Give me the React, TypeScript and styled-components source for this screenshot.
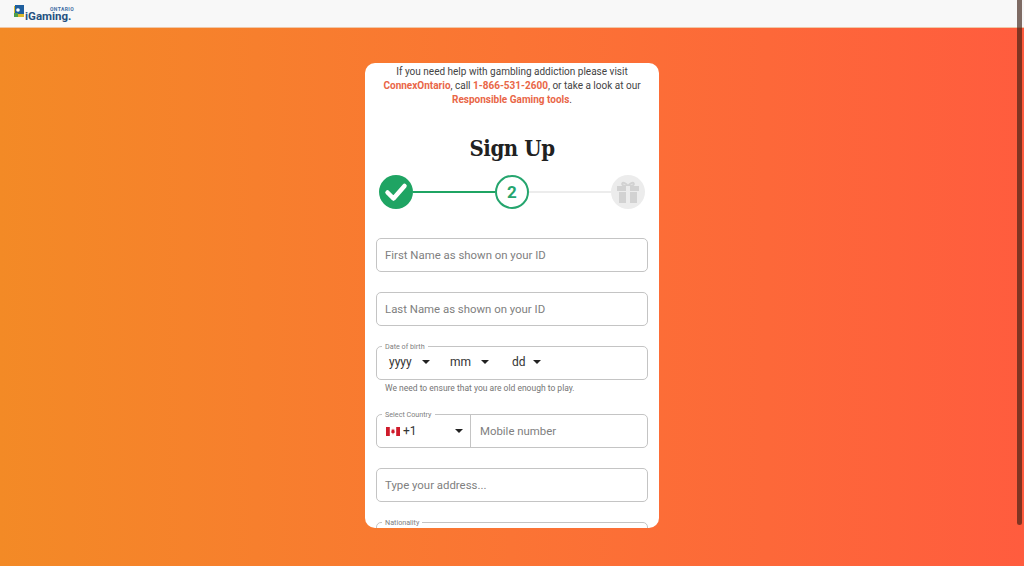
import React from 'react';
import styled, { createGlobalStyle } from 'styled-components';

const GlobalStyle = createGlobalStyle`
  html, body {
    margin: 0;
    padding: 0;
    height: 100%;
    overflow: hidden;
    font-family: Roboto, "Liberation Sans", sans-serif;
  }
`;

const Page = styled.div`
  position: relative;
  width: 1024px;
  height: 566px;
  display: flex;
  flex-direction: column;
  overflow: hidden;
  background: linear-gradient(90deg, #f38a26 0%, #fb7434 50%, #ff5c3e 100%);
`;

const TopBar = styled.header`
  height: 27px;
  flex-shrink: 0;
  background: #f8f8f8;
  border-bottom: 1px solid #f0c8a8;
  box-sizing: content-box;
  display: flex;
  align-items: flex-start;
  padding-left: 13px;
`;

const Logo = styled.div`
  position: relative;
  width: 64px;
  height: 27px;
`;

const LogoMark = styled.svg`
  position: absolute;
  left: 1px;
  top: 5px;
`;

const LogoWord = styled.span`
  position: absolute;
  left: 12px;
  top: 10px;
  font-size: 11.5px;
  line-height: 13px;
  font-weight: 700;
  color: #25507f;
`;

const LogoRegion = styled.span`
  position: absolute;
  left: 37px;
  top: 6px;
  font-size: 5px;
  line-height: 6px;
  font-weight: 700;
  letter-spacing: 0.4px;
  color: #3f6da3;
`;

const Card = styled.main`
  width: 294px;
  height: 465px;
  margin: 35px auto 0;
  box-sizing: border-box;
  padding: 2px 11px 0;
  background: #fff;
  border-radius: 10px;
  overflow: hidden;
`;

const Notice = styled.p`
  margin: 0;
  font-size: 10px;
  line-height: 14px;
  text-align: center;
  color: #444;
`;

const NoticeLink = styled.span`
  color: #e96647;
  font-weight: 700;
`;

const Title = styled.h1`
  margin: 25px 0 0;
  font-family: "DejaVu Serif Condensed", "DejaVu Serif", "Liberation Serif", serif;
  font-stretch: condensed;
  font-size: 22px;
  line-height: 32px;
  font-weight: 700;
  letter-spacing: -0.4px;
  text-align: center;
  color: #212121;
`;

const Stepper = styled.div`
  display: flex;
  align-items: center;
  margin: 11px 3px 0;
`;

const StepCircle = styled.div<{ $kind: 'done' | 'active' | 'todo' }>`
  width: 34px;
  height: 34px;
  flex-shrink: 0;
  box-sizing: border-box;
  border-radius: 50%;
  display: flex;
  align-items: center;
  justify-content: center;
  font-size: 17px;
  font-weight: 700;
  color: #25a56e;
  background: ${p => (p.$kind === 'done' ? '#1fa463' : p.$kind === 'todo' ? '#ececec' : '#fff')};
  border: ${p => (p.$kind === 'active' ? '2px solid #25a56e' : 'none')};
`;

const StepLine = styled.div<{ $done?: boolean }>`
  flex: 1;
  height: 2px;
  background: ${p => (p.$done ? '#1fa463' : '#ececec')};
`;

const Form = styled.form`
  display: flex;
  flex-direction: column;
  margin-top: 29px;
`;

const Field = styled.div<{ $gap?: number }>`
  position: relative;
  height: 34px;
  box-sizing: border-box;
  flex-shrink: 0;
  display: flex;
  align-items: center;
  border: 1px solid #c4c4c4;
  border-bottom-width: 1.5px;
  border-radius: 5px;
  margin-bottom: ${p => p.$gap ?? 20}px;
`;

const Placeholder = styled.span`
  padding-left: 8px;
  font-size: 11.4px;
  color: #808080;
`;

const Legend = styled.span`
  position: absolute;
  left: 5px;
  top: -5px;
  padding: 0 3px;
  background: #fff;
  font-size: 7.2px;
  line-height: 9px;
  color: #808080;
`;

const DateParts = styled.div`
  display: flex;
  padding: 0 0 3px 12px;
`;

const DatePart = styled.div<{ $width: number }>`
  width: ${p => p.$width}px;
  display: flex;
  align-items: center;
  font-size: 12px;
  color: #333;
`;

const Caret = styled.span<{ $left: number }>`
  width: 0;
  height: 0;
  margin-left: ${p => p.$left}px;
  border-left: 4px solid transparent;
  border-right: 4px solid transparent;
  border-top: 4px solid #222;
`;

const Helper = styled.div`
  height: 14px;
  margin: 1px 0 19px 9px;
  font-size: 8.5px;
  line-height: 14px;
  color: #757575;
`;

const CountryPicker = styled.div`
  width: 94px;
  height: 100%;
  box-sizing: border-box;
  display: flex;
  align-items: center;
  padding: 0 7px 0 9px;
  border-right: 1px solid #c4c4c4;
  font-size: 12px;
  color: #333;
`;

const Dial = styled.span`
  margin-left: 3px;
  flex: 1;
`;

const MobilePlaceholder = styled(Placeholder)`
  padding-left: 9px;
`;

const ScrollThumb = styled.div`
  position: absolute;
  top: 0;
  right: 2px;
  width: 5px;
  height: 525px;
  border-radius: 0 0 3px 3px;
  background: rgba(60, 30, 20, 0.65);
`;

const CanadaFlag = () => (
  <svg width="14" height="9" viewBox="0 0 14 9" aria-hidden="true">
    <rect width="14" height="9" fill="#fff" />
    <rect width="3.8" height="9" fill="#cf1b2b" />
    <rect x="10.2" width="3.8" height="9" fill="#cf1b2b" />
    <path d="M7 1.600 7.700 3l.9-.4-.4 2 .9-.2-.4 1.200-1.500.9v.9h-.4v-.9l-1.500-.9-.4-1.200.9.2-.4-2 .9.4z" fill="#cf1b2b" />
  </svg>
);

const GiftIcon = () => (
  <svg width="24" height="22" viewBox="0 0 24 22" aria-hidden="true">
    <path d="M12 5C10 2 7 1 6.200 2.500 5.500 4 8 5 12 5c4 0 6.500-1 5.800-2.500C17 1 14 2 12 5z" fill="none" stroke="#d2d2d2" strokeWidth="1.800" />
    <rect x="1" y="5" width="22" height="5" fill="#d2d2d2" />
    <rect x="3" y="11" width="18" height="11" fill="#d2d2d2" />
    <rect x="10" y="5" width="4" height="17" fill="#ececec" />
  </svg>
);

const App: React.FC = () => {
  return (
    <Page>
      <GlobalStyle />
      <TopBar>
        <Logo>
          <LogoMark width="11" height="12" viewBox="0 0 11 12" aria-hidden="true">
            <rect x="0" y="1" width="10" height="11" fill="#d9b92e" />
            <rect x="1" y="0" width="9" height="9" fill="#1f5f9e" />
            <circle cx="4" cy="5" r="1.800" fill="#fff" />
            <rect x="0" y="8" width="4" height="4" fill="#4f9e4a" />
          </LogoMark>
          <LogoRegion>ONTARIO</LogoRegion>
          <LogoWord>iGaming.</LogoWord>
        </Logo>
      </TopBar>
      <Card>
        <Notice>
          If you need help with gambling addiction please visit <NoticeLink>ConnexOntario</NoticeLink>, call{' '}
          <NoticeLink>1-866-531-2600</NoticeLink>, or take a look at our <NoticeLink>Responsible Gaming tools</NoticeLink>.
        </Notice>
        <Title>Sign Up</Title>
        <Stepper>
          <StepCircle $kind="done">
            <svg width="24" height="20" viewBox="0 0 24 20" aria-hidden="true">
              <path d="M3.500 10.500 9.500 16.500 20.500 4" fill="none" stroke="#fff" strokeWidth="4.500" strokeLinecap="round" strokeLinejoin="round" />
            </svg>
          </StepCircle>
          <StepLine $done />
          <StepCircle $kind="active">2</StepCircle>
          <StepLine />
          <StepCircle $kind="todo">
            <GiftIcon />
          </StepCircle>
        </Stepper>
        <Form>
          <Field>
            <Placeholder>First Name as shown on your ID</Placeholder>
          </Field>
          <Field>
            <Placeholder>Last Name as shown on your ID</Placeholder>
          </Field>
          <Field $gap={0}>
            <Legend>Date of birth</Legend>
            <DateParts>
              <DatePart $width={61}>
                yyyy
                <Caret $left={10} />
              </DatePart>
              <DatePart $width={62}>
                mm
                <Caret $left={10} />
              </DatePart>
              <DatePart $width={40}>
                dd
                <Caret $left={7} />
              </DatePart>
            </DateParts>
          </Field>
          <Helper>We need to ensure that you are old enough to play.</Helper>
          <Field>
            <Legend>Select Country</Legend>
            <CountryPicker>
              <CanadaFlag />
              <Dial>+1</Dial>
              <Caret $left={0} />
            </CountryPicker>
            <MobilePlaceholder>Mobile number</MobilePlaceholder>
          </Field>
          <Field>
            <Placeholder>Type your address...</Placeholder>
          </Field>
          <Field>
            <Legend>Nationality</Legend>
          </Field>
        </Form>
      </Card>
      <ScrollThumb />
    </Page>
  );
};

export default App;
